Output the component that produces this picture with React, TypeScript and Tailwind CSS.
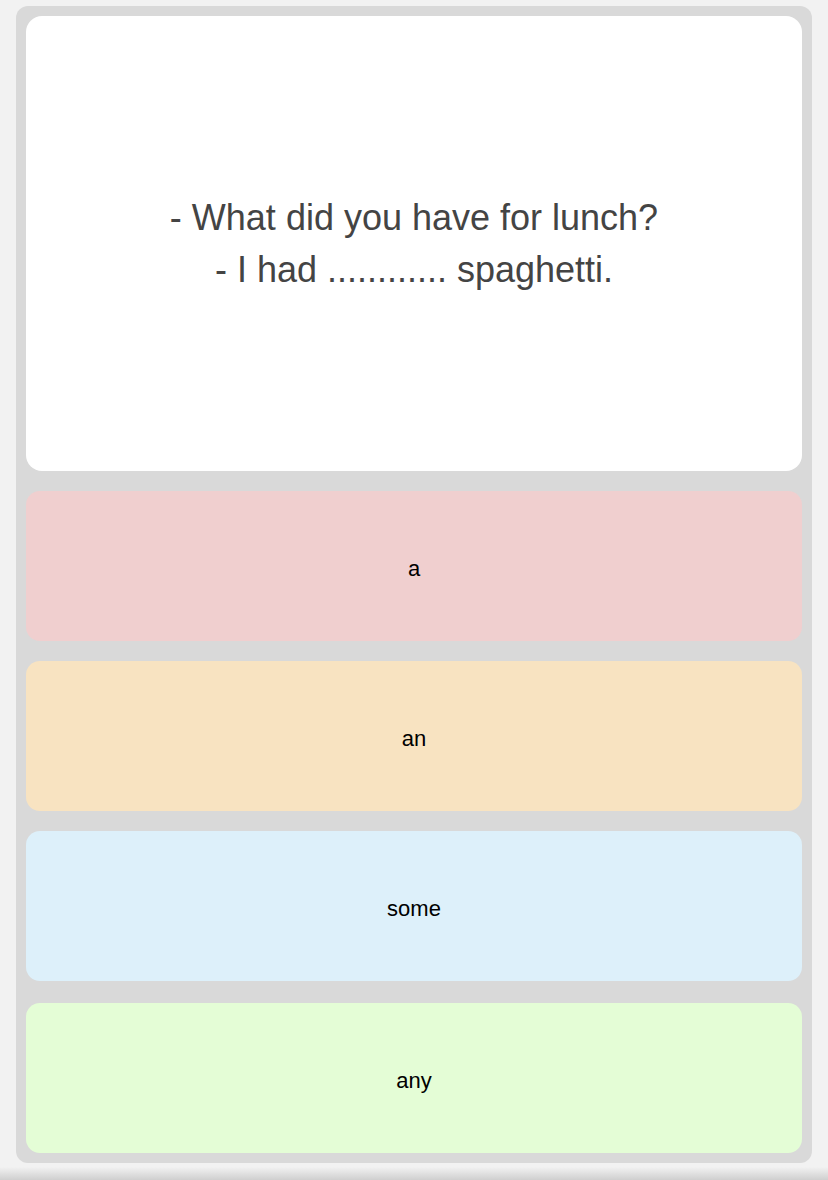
const answers = [
  { label: 'a', bg: 'bg-[#f0cfcf]', extra: '' },
  { label: 'an', bg: 'bg-[#f8e3c1]', extra: '' },
  { label: 'some', bg: 'bg-[#ddf0fa]', extra: '' },
  { label: 'any', bg: 'bg-[#e4fdd6]', extra: 'mt-[2px]' },
];

export default function App() {
  return (
    <div className="min-h-[1180px] bg-[#f2f2f2] pt-[6px] font-['Liberation_Sans',Arial,sans-serif] relative overflow-hidden">
      <div className="mx-4 rounded-[12px] bg-[#d9d9d9] p-[10px] flex flex-col gap-5">
        <div className="h-[455px] rounded-[16px] bg-white flex flex-col items-center justify-center text-[36px] leading-[52px] text-[#444444] text-center">
          <div>- What did you have for lunch?</div>
          <div>- I had ............ spaghetti.</div>
        </div>
        {answers.map((a) => (
          <button
            key={a.label}
            className={`h-[150px] rounded-[14px] ${a.bg} ${a.extra} flex items-center justify-center pt-[4px] text-[22px] text-black`}
          >
            {a.label}
          </button>
        ))}
      </div>
      <div className="absolute left-0 right-0 bottom-0 h-[13px] bg-gradient-to-b from-[#f2f2f2] to-[#cfcfcf]" />
    </div>
  );
}
